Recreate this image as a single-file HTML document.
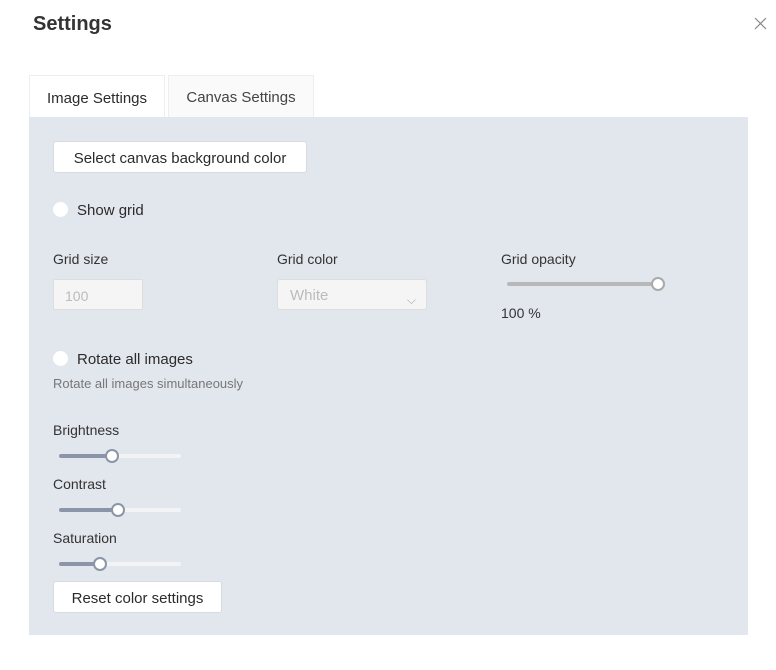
<!DOCTYPE html><html><head><style>
body{margin:0;width:776px;height:670px;background:#fff;font-family:"Liberation Sans",sans-serif;color:#2b2b2b;position:relative;overflow:hidden}
.a{position:absolute}
.btn{position:absolute;background:#fff;border:1px solid #d8dce2;border-radius:3px;font-size:15px;display:flex;align-items:center;justify-content:center;color:#2b2b2b}
.lbl{position:absolute;font-size:14px;color:#333}
.radio{position:absolute;width:15px;height:15px;border-radius:50%;background:#fff}
.track{position:absolute;height:4px;border-radius:2px;background:#f2f3f5}
.fill{position:absolute;height:4px;border-radius:2px;background:#8a96a8}
.thumb{position:absolute;width:10px;height:10px;border-radius:50%;background:#fff;border:2px solid #8a96a8}
</style></head><body>
<div class="a" style="left:33px;top:13px;font-size:20px;font-weight:bold;color:#333">Settings</div>
<svg class="a" style="left:754px;top:17px" width="13" height="13" viewBox="0 0 13 13"><path d="M1 1L12 12M12 1L1 12" stroke="#888" stroke-width="1.2"/></svg>
<div class="a" style="left:29px;top:75px;width:136px;height:43px;background:#fff;border:1px solid #eee;border-bottom:none;box-sizing:border-box;font-size:15px;display:flex;align-items:center;justify-content:center;padding-top:2px">Image Settings</div>
<div class="a" style="left:168px;top:75px;width:146px;height:42px;background:#fafafa;border:1px solid #eee;border-bottom:none;box-sizing:border-box;font-size:15px;color:#444;display:flex;align-items:center;justify-content:center;padding-top:2px">Canvas Settings</div>
<div class="a" style="left:29px;top:117px;width:719px;height:518px;background:#e2e6ed"></div>
<div class="btn" style="left:53px;top:141px;width:252px;height:30px;padding-top:2px;box-sizing:content-box;height:28px">Select canvas background color</div>
<div class="radio" style="left:53px;top:202px"></div>
<div class="a" style="left:77px;top:202px;font-size:15px">Show grid</div>
<div class="lbl" style="left:53px;top:251px">Grid size</div>
<div class="lbl" style="left:277px;top:251px">Grid color</div>
<div class="lbl" style="left:501px;top:251px">Grid opacity</div>
<div class="a" style="left:53px;top:279px;background:#f5f5f5;border:1px solid #ddd;border-radius:2px;font-size:14px;color:#bbb;line-height:32px;padding-left:11px;box-sizing:border-box;width:90px;height:31px">100</div>
<div class="a" style="left:277px;top:279px;width:150px;height:31px;background:#f5f5f5;border:1px solid #ddd;border-radius:3px;box-sizing:border-box;font-size:15px;color:#bbb;line-height:32px;padding-left:12px">White<span style="position:absolute;right:10px;top:4px;font-size:12px;color:#aaa">⌵</span></div>
<div class="a" style="left:507px;top:282px;width:150px;height:4px;border-radius:2px;background:#b8b8b8"></div>
<div class="a" style="left:651px;top:277px;width:10px;height:10px;border-radius:50%;background:#fff;border:2px solid #aaa"></div>
<div class="lbl" style="left:501px;top:305px">100 %</div>
<div class="radio" style="left:53px;top:351px"></div>
<div class="a" style="left:77px;top:351px;font-size:15px">Rotate all images</div>
<div class="a" style="left:53px;top:376px;font-size:13px;color:#777">Rotate all images simultaneously</div>
<div class="lbl" style="left:53px;top:422px">Brightness</div>
<div class="track" style="left:59px;top:454px;width:122px"></div><div class="fill" style="left:59px;top:454px;width:53px"></div><div class="thumb" style="left:105px;top:449px"></div>
<div class="lbl" style="left:53px;top:476px">Contrast</div>
<div class="track" style="left:59px;top:508px;width:122px"></div><div class="fill" style="left:59px;top:508px;width:59px"></div><div class="thumb" style="left:111px;top:503px"></div>
<div class="lbl" style="left:53px;top:530px">Saturation</div>
<div class="track" style="left:59px;top:562px;width:122px"></div><div class="fill" style="left:59px;top:562px;width:41px"></div><div class="thumb" style="left:93px;top:557px"></div>
<div class="btn" style="left:53px;top:581px;width:167px;height:28px;padding-top:2px">Reset color settings</div>
</body></html>
